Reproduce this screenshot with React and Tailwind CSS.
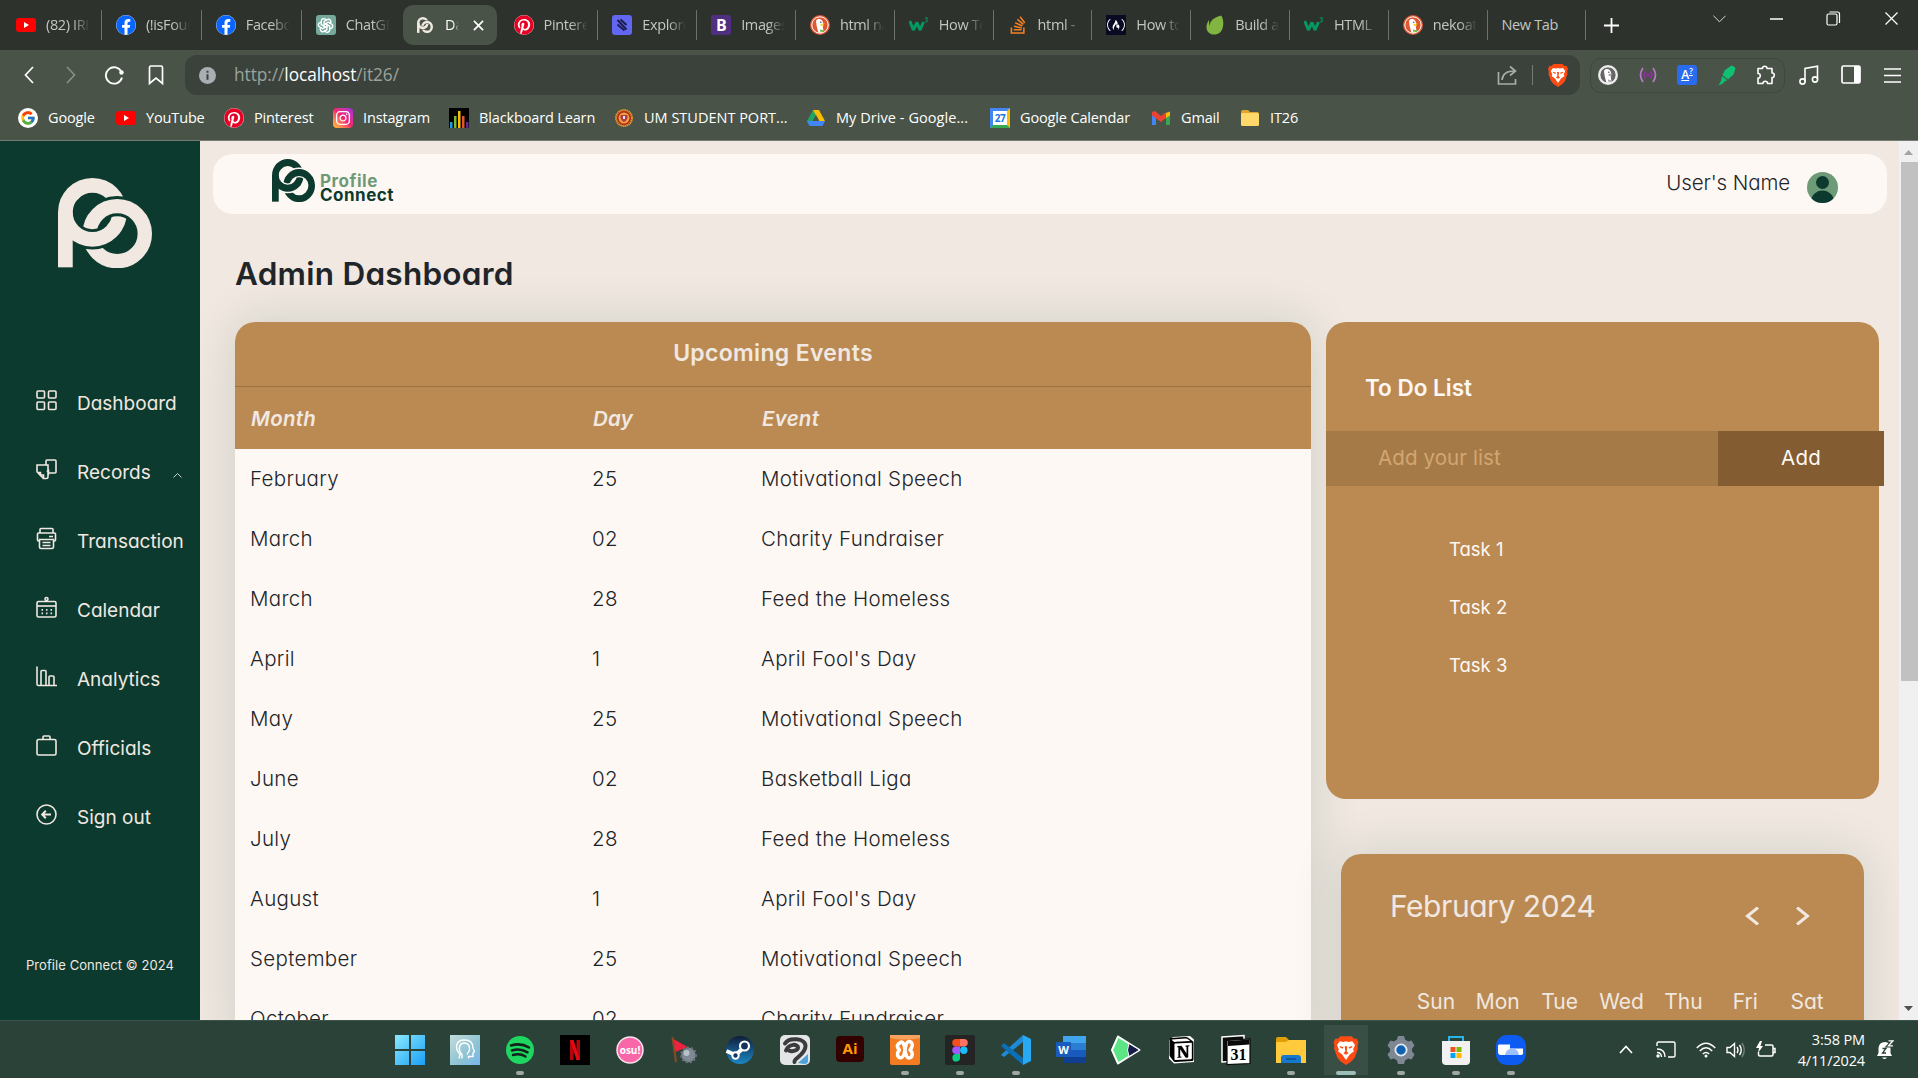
import React from "react";
import { FaFacebook, FaPinterest, FaInstagram, FaStackOverflow, FaFreeCodeCamp } from "react-icons/fa";
import { FcGoogle } from "react-icons/fc";
import { SiXampp, SiNotion } from "react-icons/si";
import { TbBrandOpenai } from "react-icons/tb";

/* ---------- shared marks ---------- */

function Logo({ id, className, color, gap }) {
  return (
    <svg viewBox="25 37 281 270" preserveAspectRatio="none" className={className} fill="none">
      <clipPath id={id}>
        <path d="M-59 -21L400 375V500H-59Z" />
      </clipPath>
      <clipPath id={`${id}-wide`}>
        <path d="M-59 -33L400 363V500H-59Z" />
      </clipPath>
      <circle cx="128" cy="140" r="81" stroke={color} strokeWidth="44" />
      <circle cx="202" cy="204" r="82.500" stroke={gap} strokeWidth="61" />
      <circle cx="202" cy="204" r="82.500" stroke={color} strokeWidth="43" />
      <g clipPath={`url(#${id})`}>
        <circle cx="128" cy="140" r="81" stroke={gap} strokeWidth="61" />
      </g>
      <g clipPath={`url(#${id}-wide)`}>
        <circle cx="128" cy="140" r="81" stroke={color} strokeWidth="44" />
      </g>
      <path d="M25 140H69V305H25Z" fill={color} />
    </svg>
  );
}

const YouTube = () => (
  <svg viewBox="0 0 20 20" className="size-5">
    <rect y="3" width="20" height="14" rx="3" fill="#f00" />
    <path d="M8 7v6l5-3z" fill="#fff" />
  </svg>
);
const Facebook = () => (
  <span className="flex size-5 rounded-full bg-white">
    <FaFacebook className="size-5 text-[#0866ff]" />
  </span>
);
const Pinterest = () => (
  <span className="flex size-5 rounded-full bg-white">
    <FaPinterest className="size-5 text-[#e60023]" />
  </span>
);
const ChatGpt = () => (
  <span className="flex size-5 items-center justify-center rounded-[3px] bg-[#75a99c]">
    <TbBrandOpenai className="size-[17px] text-white" />
  </span>
);
const Explore = () => (
  <svg viewBox="0 0 20 20" className="size-5">
    <rect width="20" height="20" rx="3" fill="#6366f1" />
    <path d="M5.500 9.500l7 6M5.500 5l9 9.500M8.500 4.500l6 5.500" stroke="#1c1e4c" strokeWidth="2" />
  </svg>
);
const Bootstrap = () => (
  <span className="flex size-5 items-center justify-center rounded-[3px] bg-[#4f2f7f] text-[16px] leading-none font-bold text-white">B</span>
);
const Duck = ({ mono }) => (
  <svg viewBox="0 0 20 20" className="size-5">
    <circle cx="10" cy="10" r="10" fill={mono ? "#e8e8e8" : "#de5833"} />
    <circle cx="10" cy="10" r="8.200" fill={mono ? "#666" : "#de5833"} stroke="#fff" strokeWidth="1" />
    <path d="M7 4.500c3-1.500 6 .5 6.200 4 .1 2-.5 3.500-.2 5l.8 3.600c-2 .9-4 .9-5.500.2C7.500 14 6.500 11 6.300 8.500 6.100 6.500 5.800 5.200 7 4.500z" fill="#fff" />
    <path d="M10.500 9.200c1.500-.7 3-.9 4.500-.6-.8.9-2 1.300-3.300 1.500 1 .4 2 .5 2.600.6-1.500.9-3.400.6-3.800-.4z" fill={mono ? "#999" : "#fdd20a"} />
    <path d="M10 14.500l4 1v1.700l-4-.6z" fill={mono ? "#aaa" : "#65bc46"} />
    <circle cx="10.800" cy="7.200" r=".8" fill={mono ? "#555" : "#2d4f8e"} />
  </svg>
);
const W3 = () => (
  <svg viewBox="0 0 20 20" className="size-5" fill="none" stroke="#059862">
    <path d="M.8 6l3.600 9L8 7.500l3 7.500 3.500-8" strokeWidth="3" strokeLinejoin="bevel" />
    <path d="M15.800 3h3l-1.600 1.700c2.400 0 2 3-1.400 2.100" strokeWidth="1" />
  </svg>
);
const StackOverflow = () => <FaStackOverflow className="size-5 text-[#f48024]" />;
const FreeCode = () => (
  <span className="flex size-5 items-center justify-center bg-[#0a0a23]">
    <FaFreeCodeCamp className="size-[18px] text-white" />
  </span>
);
const Leaf = () => (
  <svg viewBox="0 0 20 20" className="size-5">
    <path d="M16 .5c3 3 3.500 13-1 17-5 4-13 2-13.500-4.500-.2-3 .8-5.500 2.500-8 .3 2-.2 4 .5 6C5 5 10 2 16 .5z" fill="#81b441" />
  </svg>
);
const Brave = ({ className }) => (
  <svg viewBox="0 0 20 24" className={className}>
    <path d="M5.500 1h9l2 2 2-.2L20 6l-.7 2 .2 3-2.500 7-2.500 3L10 24l-4.500-3L3 18 .5 11l.2-3L0 6l1.500-3.200 2 .2z" fill="#fb4b12" />
    <path d="M5 5l3 .6L10 5l2 .6L15 5l2.200 3-1.500 3.500.7 1.500-3.400 2.500L10 20l-3-4.500L3.600 13l.7-1.500L2.800 8z" fill="#fff" />
    <path d="M5 8.800l3 .9-.8 1.300L5 9.700zM15 8.800l-3 .9.800 1.300L15 9.700zM9 9l.4 4L8 14.500l2 1.300 2-1.300L10.600 13 11 9z" fill="#fb4b12" />
  </svg>
);

/* ---------- browser chrome ---------- */

const leftTabs = [
  ["(82) IRIS", YouTube],
  ["(!isFound", Facebook],
  ["Facebook", Facebook],
  ["ChatGPT", ChatGpt],
];
const rightTabs = [
  ["Pinterest", Pinterest],
  ["Explore", Explore],
  ["Images", Bootstrap],
  ["html nav", Duck],
  ["How To", W3],
  ["html -", StackOverflow],
  ["How to", FreeCode],
  ["Build an", Leaf],
  ["HTML", W3],
  ["nekoatsu", Duck],
];

function Tab({ title, icon: Icon, wide, last }) {
  return (
    <div className={`flex h-[30px] shrink-0 items-center pl-[14px] ${wide ? "w-[99.9px]" : "w-[98.8px]"} ${last ? "" : "border-r border-[#6c716b]"}`}>
      <Icon />
      <span className="ml-[10px] w-[44px] overflow-hidden whitespace-nowrap text-[#c3c7c1] [mask-image:linear-gradient(to_right,#000_60%,transparent)]">{title}</span>
    </div>
  );
}

function TabStrip() {
  return (
    <div className="flex h-[50px] shrink-0 items-center bg-[#2d322d] pl-[2px] text-[14.5px] tracking-[-0.025em]">
      {leftTabs.map(([t, I], i) => (
        <Tab key={t} title={t} icon={I} wide last={i === 3} />
      ))}
      <div className="ml-[1.5px] flex h-10 w-[94px] shrink-0 items-center rounded-[10px] bg-[#495347] pl-[14px]">
        <Logo id="fav" className="h-4 w-[16px]" color="#f0e8e1" gap="#495347" />
        <span className="ml-[12px] w-[14px] overflow-hidden text-white [mask-image:linear-gradient(to_right,#000_55%,transparent)]">Dashboard</span>
        <svg viewBox="0 0 12 12" className="ml-[14px] size-[11px]" stroke="#fff" strokeWidth="1.800">
          <path d="M1 1l10 10M11 1L1 11" />
        </svg>
      </div>
      <div className="w-[2.5px] shrink-0" />
      {rightTabs.map(([t, I]) => (
        <Tab key={t} title={t} icon={I} />
      ))}
      <div className="flex h-[30px] w-[98.800px] shrink-0 items-center border-r border-[#6c716b] pl-[14px] text-[#c3c7c1]">New Tab</div>
      <svg viewBox="0 0 15 15" className="ml-[18px] size-[15px]" stroke="#fff" strokeWidth="1.800">
        <path d="M7.500 0v15M0 7.500h15" />
      </svg>
      <div className="mb-[13px] flex flex-1 items-center justify-end pr-[20px]">
        <svg viewBox="0 0 14 8" className="h-2 w-[13px]" fill="none" stroke="#e6e8e6">
          <path d="M.5.5L7 7 13.500.5" />
        </svg>
        <svg viewBox="0 0 13 2" className="ml-[44px] h-[2px] w-[13px]" stroke="#fff" strokeWidth="1.500">
          <path d="M0 1h13" />
        </svg>
        <svg viewBox="0 0 15 15" className="ml-[43px] size-[15px]" fill="none" stroke="#fff" strokeWidth="1.200">
          <rect x="1" y="3" width="10" height="11" rx="1.500" />
          <path d="M3.500 1h8q2 0 2 2v9" />
        </svg>
        <svg viewBox="0 0 13 13" className="ml-[44px] size-[13px]" stroke="#fff" strokeWidth="1.200">
          <path d="M.5.5l12 12M12.500.5l-12 12" />
        </svg>
      </div>
    </div>
  );
}

function Toolbar() {
  return (
    <div className="flex h-[50px] shrink-0 items-center">
      <svg viewBox="0 0 10 18" className="ml-[24px] h-[18px] w-[10px]" fill="none" stroke="#fff" strokeWidth="1.700">
        <path d="M9 1L1.500 9 9 17" />
      </svg>
      <svg viewBox="0 0 10 18" className="ml-[32px] h-[18px] w-[10px]" fill="none" stroke="#889085" strokeWidth="1.700">
        <path d="M1 1l7.500 8L1 17" />
      </svg>
      <svg viewBox="0 0 20 20" className="ml-[28px] size-5" fill="none" stroke="#fff" strokeWidth="1.800">
        <path d="M17.500 7A8.200 8.200 0 1 0 18 12.500" />
        <circle cx="17.500" cy="7.500" r="2.200" fill="#fff" stroke="none" />
      </svg>
      <svg viewBox="0 0 16 20" className="ml-[24px] h-5 w-4" fill="none" stroke="#fff" strokeWidth="1.700">
        <path d="M1.500 2.500q0-1.500 1.500-1.500h10q1.500 0 1.500 1.500v16L8 13l-6.500 5.500z" />
      </svg>
      <div className="ml-[21px] flex h-10 w-[1395px] items-center rounded-[12px] bg-[#3a423b] pr-[12px] pl-[14px]">
        <svg viewBox="0 0 17 17" className="size-[17px]">
          <circle cx="8.500" cy="8.500" r="8.500" fill="#a9aeb1" />
          <path d="M8.500 3.800v2M8.500 7.200v5.500" stroke="#3a423b" strokeWidth="2" />
        </svg>
        <span className="ml-[18px] flex-1 text-[17.300px] tracking-[-0.003em] text-[#9ca29c]">
          http://<span className="text-white">localhost</span>/it26/
        </span>
        <svg viewBox="0 0 20 20" className="size-5" fill="none" stroke="#a7ada6" strokeWidth="1.700">
          <path d="M1.500 7v12h17v-5M5 15c.5-6 4-9 12.500-9M13 1.500L18.500 6 13 10.500" />
        </svg>
        <div className="mx-[15px] h-5 w-px bg-[#747b73]" />
        <Brave className="h-6 w-5" />
      </div>
      <div className="ml-[10px] flex h-[35px] w-[195px] items-center justify-between rounded-[11px] border border-[#3f483e] pr-[8px] pl-[7px]">
        <Duck mono />
        <svg viewBox="0 0 18 16" className="h-4 w-[18px]" fill="none" strokeWidth="1.700">
          <path d="M4 1q-5 7 0 14M14 1q5 7 0 14" stroke="#b77cc4" />
          <path d="M6.500 4.500q-2.500 3.500 0 7M11.500 4.500q2.500 3.500 0 7" stroke="#9c27b0" />
          <circle cx="9" cy="8" r="1.500" fill="#9c27b0" />
        </svg>
        <span className="flex size-5 items-center justify-center rounded-[3px] bg-[#2a6cf0] text-[12px] leading-none font-semibold text-white underline">
          A<sup className="text-[8px]">?</sup>
        </span>
        <svg viewBox="0 0 18 21" className="h-[21px] w-[18px]">
          <path d="M13.500.5q3 .5 4 3l-2 6-5.500 5-5.500-4.500 2.500-5z" fill="#0fbf72" />
          <path d="M4 11l5.200 4.300-2.700 1.200-1.500 2L.5 20.500 3 16z" fill="#0fbf72" />
        </svg>
        <svg viewBox="0 0 20 20" className="size-5" fill="none" stroke="#fff" strokeWidth="1.600" strokeLinejoin="round">
          <path d="M2 3.500h4.500C6 .5 11.500.5 11 3.500h5V8c3-.5 3 5 0 4.500v6h-4.500c.5-3-5-3-4.500 0H2V13c3 .5 3-5 0-4.500z" />
        </svg>
      </div>
      <svg viewBox="0 0 20 20" className="ml-[14px] size-5" fill="none" stroke="#fff" strokeWidth="1.600">
        <path d="M6 16.500V3.500l12.500-2.300v13" />
        <circle cx="3.500" cy="16.500" r="2.600" />
        <circle cx="16" cy="14.500" r="2.600" />
      </svg>
      <svg viewBox="0 0 20 20" className="ml-[22px] size-5">
        <rect x="1" y="1" width="18" height="17" rx="1.500" fill="none" stroke="#fff" strokeWidth="1.700" />
        <path d="M13 1h6v17h-6z" fill="#fff" />
      </svg>
      <svg viewBox="0 0 17 15" className="ml-[23px] h-[15px] w-[17px]" stroke="#fff" strokeWidth="1.500">
        <path d="M0 1h17M0 7.500h17M0 14h17" />
      </svg>
    </div>
  );
}

const Instagram = () => (
  <span className="flex size-5 items-center justify-center rounded-[4px] bg-linear-to-tr from-[#ffc107] via-[#f4216b] to-[#a31ae0]">
    <FaInstagram className="size-4 text-white" />
  </span>
);
const Google = () => (
  <span className="flex size-5 items-center justify-center rounded-full bg-white">
    <FcGoogle className="size-4" />
  </span>
);
const Blackboard = () => (
  <svg viewBox="0 0 20 20" className="size-5">
    <path d="M0 0h20v20H0z" fill="#000" />
    <path d="M1 14h2.500v6H1z" fill="#1e9be8" />
    <path d="M5 8h2.500v12H5z" fill="#7cb82f" />
    <path d="M9 3h2.500v17H9z" fill="#fbbc05" />
    <path d="M13 8h2.500v12H13z" fill="#e4572e" />
    <path d="M17 14h2.500v6H17z" fill="#5b2d8e" />
  </svg>
);
const Seal = () => (
  <svg viewBox="0 0 20 20" className="size-5">
    <circle cx="10" cy="10" r="8" fill="#b3261e" stroke="#d9a02b" strokeWidth="2" strokeDasharray="1.500 .6" />
    <circle cx="10" cy="10" r="5.500" fill="#e8a33b" />
    <path d="M6.500 7h7v3q-1 3-3.500 4-2.500-1-3.500-4z" fill="#b33a45" />
    <path d="M9 8h2v3H9z" fill="#e6e6ee" />
  </svg>
);
const Drive = () => (
  <svg viewBox="0 0 20 20" className="size-5">
    <path d="M7 2h6L6.500 14 3.500 18 1 13z" fill="#1fa463" />
    <path d="M7 2h6l6 11h-6z" fill="#fbbc04" />
    <path d="M1 13l2.500 5h13l2.500-5H6.500z" fill="#4285f4" />
    <path d="M10 7l-3.300 6h6.600z" fill="#495347" />
  </svg>
);
const GCalendar = () => (
  <span className="flex size-5 items-center justify-center border-[3px] border-t-[#4285f4] border-r-[#fbbc04] border-b-[#34a853] border-l-[#4285f4] bg-white text-[10px] leading-none font-bold tracking-[-0.05em] text-[#1a73e8]">27</span>
);
const Gmail = () => (
  <svg viewBox="0 0 20 20" className="size-5">
    <path d="M1 5v12h4V8z" fill="#4285f4" />
    <path d="M19 5v12h-4V8z" fill="#34a853" />
    <path d="M15 5l4-1.500v4L15 10z" fill="#fbbc04" />
    <path d="M1 4l3-1 6 5 5-4v6l-5 4-9-6.500z" fill="#ea4335" />
  </svg>
);
const Folder = () => (
  <svg viewBox="0 0 20 20" className="size-5">
    <path d="M1 4q0-2 2-2h5l2 2h7q2 0 2 2v10H1z" fill="#dfa52c" />
    <rect x="1" y="5" width="18" height="13" rx="1.500" fill="#ffd86b" />
  </svg>
);

const bookmarks = [
  ["Google", Google, "w-[98px]"],
  ["YouTube", YouTube, "w-[108px]"],
  ["Pinterest", Pinterest, "w-[109px]"],
  ["Instagram", Instagram, "w-[116px]"],
  ["Blackboard Learn", Blackboard, "w-[165px]"],
  ["UM STUDENT PORT...", Seal, "w-[192px] tracking-[0px]"],
  ["My Drive - Google...", Drive, "w-[184px] tracking-[0.004em]"],
  ["Google Calendar", GCalendar, "w-[161px]"],
  ["Gmail", Gmail, "w-[89px]"],
  ["IT26", Folder, "w-[80px]"],
];

function Bookmarks() {
  return (
    <div className="flex h-10 shrink-0 items-center pb-1 pl-[18px] text-[14.5px] tracking-[-0.01em] text-white">
      {bookmarks.map(([t, I, w]) => (
        <div key={t} className={`flex shrink-0 items-center gap-[10px] whitespace-nowrap ${w}`}>
          <I />
          {t}
        </div>
      ))}
    </div>
  );
}

/* ---------- page ---------- */

const navIcons = {
  Dashboard: (
    <>
      <rect x="1" y="1" width="7.500" height="7" rx="1" />
      <rect x="12.500" y="1" width="7.500" height="7" rx="1" />
      <rect x="1" y="12" width="7.500" height="7.500" rx="1" />
      <rect x="12.500" y="12" width="7.500" height="7.500" rx="1" />
    </>
  ),
  Records: (
    <>
      <path d="M10 6V2q0-1 1-1h8q1 0 1 1v11q0 1-1 1h-6" />
      <path d="M1 6h11v12q0 1.500-1.500 1.500H7.500V16H4.500V13.500H2q-1 0-1-1zM2 14l5.500 5.500M12.500 10.500v3l-1.500-2" />
    </>
  ),
  Transaction: (
    <>
      <path d="M4 5V1.500q0-1 1-1h11q1 0 1 1V5" />
      <path d="M4 13H2.500q-1 0-1-1V6q0-1 1-1h16q1 0 1 1v6q0 1-1 1H17M13 8.500h4" />
      <path d="M3.500 11.500h14V19q0 1.500-1.500 1.500H5Q3.500 20.500 3.500 19zM6.500 14.500h8M6.500 17.500h8" />
    </>
  ),
  Calendar: (
    <>
      <rect x="1" y="4.500" width="19" height="15.500" rx="1.500" />
      <path d="M1 9h19" />
      <circle cx="10.500" cy="2" r="1.500" />
      <path d="M5.500 12.800H16M5.500 16.300H16" strokeDasharray="1.500 3" strokeWidth="1.800" />
    </>
  ),
  Analytics: <path d="M1 .5v17.500q0 1.500 1.500 1.500H21M5 19V5.500q0-1 1-1h3q1 0 1 1V19M13 19V11q0-1 1-1h3q1 0 1 1v8" />,
  Officials: (
    <>
      <rect x="1" y="4.500" width="19" height="15.500" rx="1.500" />
      <path d="M7 4.500V2q0-1 1-1h5q1 0 1 1v2.500" />
    </>
  ),
  "Sign out": (
    <>
      <circle cx="10.500" cy="10.500" r="9.500" />
      <path d="M15 10.500H6.500M9.800 6.800L6.200 10.500l3.600 3.700" strokeWidth="2" />
    </>
  ),
};

function Sidebar() {
  return (
    <aside className="flex w-[200px] shrink-0 flex-col bg-[#0d3a2e] pt-[37px] text-[#f0e8e1]">
      <Logo id="side" className="ml-[58px] h-[90px] w-[94px] shrink-0" color="#f0e8e1" gap="#0d3a2e" />
      <nav className="mt-[102px]">
        {Object.entries(navIcons).map(([name, art]) => (
          <div key={name} className="flex h-[69px] items-center pl-[36px] text-[19px]">
            <svg viewBox="0 0 21 21" className="mr-[20px] mb-[8px] size-[21px] shrink-0 overflow-visible" fill="none" stroke="#f0e8e1" strokeWidth="1.600">
              {art}
            </svg>
            {name}
            {name === "Records" && (
              <svg viewBox="0 0 9 6" className="mt-[3px] mr-[18px] ml-auto h-[6px] w-[9px]" fill="none" stroke="#c9d0c8">
                <path d="M.5 5.500l4-4 4 4" />
              </svg>
            )}
          </div>
        ))}
      </nav>
      <p className="mt-[102px] pl-[26px] text-[13px] leading-5 tracking-[0.005em] whitespace-nowrap">Profile Connect © 2024</p>
    </aside>
  );
}

const events = [
  ["February", "25", "Motivational Speech"],
  ["March", "02", "Charity Fundraiser"],
  ["March", "28", "Feed the Homeless"],
  ["April", "1", "April Fool's Day"],
  ["May", "25", "Motivational Speech"],
  ["June", "02", "Basketball Liga"],
  ["July", "28", "Feed the Homeless"],
  ["August", "1", "April Fool's Day"],
  ["September", "25", "Motivational Speech"],
  ["October", "02", "Charity Fundraiser"],
];

function Events() {
  return (
    <section className="w-[1076px] shrink-0 self-start rounded-[20px] bg-[#fef8f4] shadow-[0_0_50px_rgba(13,58,46,0.14)]">
      <div className="rounded-t-[20px] bg-[#bb8a52] text-[#f0e8e1]">
        <h2 className="flex h-[65px] items-center justify-center border-b border-[#9b7343] pb-[2px] text-[23px] font-semibold tracking-[0.014em]">Upcoming Events</h2>
        <div className="grid h-[62px] grid-cols-[342px_169px_1fr] items-center pt-[2px] pl-4 text-[20.500px] font-semibold tracking-[0.012em] italic">
          <span>Month</span>
          <span>Day</span>
          <span>Event</span>
        </div>
      </div>
      {events.map(([m, d, e], i) => (
        <div key={i} className="grid h-[60px] grid-cols-[342px_169px_1fr] items-center pt-[1px] pl-[15px] text-[20.500px] font-light tracking-[0.016em] text-[#212529]">
          <span>{m}</span>
          <span>{d}</span>
          <span>{e}</span>
        </div>
      ))}
    </section>
  );
}

function Todo() {
  return (
    <section className="h-[477px] rounded-[20px] bg-[#bb8a52] text-[#fef8f4]">
      <h2 className="h-[109px] pt-[51px] pl-[39px] text-[22.500px] leading-[30px] font-semibold">To Do List</h2>
      <div className="flex h-[55px] w-[558px] text-[20.500px]">
        <div className="flex w-[392px] items-center bg-[#a67a47] pl-[52px] tracking-[0.005em] text-[#d3a671]">Add your list</div>
        <div className="flex flex-1 items-center justify-center bg-[#835c31] tracking-[0.01em]">Add</div>
      </div>
      <ul className="pt-[35px] pl-[123px] text-[18.500px]">
        <li className="flex h-[58px] items-center">Task 1</li>
        <li className="flex h-[58px] items-center">Task 2</li>
        <li className="flex h-[58px] items-center">Task 3</li>
      </ul>
    </section>
  );
}

function Calendar() {
  return (
    <section className="mt-[55px] ml-[15px] h-[460px] w-[523px] rounded-[20px] bg-[#bb8a52] pt-[31px] text-[#f0e8e1] shadow-[0_0_50px_rgba(13,58,46,0.14)]">
      <div className="flex h-[42px] items-center pr-[54px] pl-[49px]">
        <h2 className="flex-1 text-[30px] tracking-[-0.015em]">February 2024</h2>
        <svg viewBox="0 0 14 18" className="mt-[20px] h-[18px] w-[14px]" fill="none" stroke="#f0e8e1" strokeWidth="3">
          <path d="M13 .5L2.500 9 13 17.500" />
        </svg>
        <svg viewBox="0 0 14 18" className="mt-[20px] ml-[37px] h-[18px] w-[14px]" fill="none" stroke="#f0e8e1" strokeWidth="3">
          <path d="M1 .5L11.500 9 1 17.500" />
        </svg>
      </div>
      <div className="mt-[60px] ml-[64px] grid w-[433px] grid-cols-7 text-center text-[21px] leading-[30px]">
        {["Sun", "Mon", "Tue", "Wed", "Thu", "Fri", "Sat"].map((d) => (
          <span key={d}>{d}</span>
        ))}
      </div>
    </section>
  );
}

function Page() {
  return (
    <div className="flex h-[879px] shrink-0 overflow-hidden bg-[#f0e8e1] font-[Inter,sans-serif] [font-feature-settings:'cv11']">
      <Sidebar />
      <main className="h-[879px] w-[1699px] shrink-0 overflow-hidden pt-[13px]">
        <header className="mr-[12px] ml-[13px] flex h-[60px] items-center rounded-[20px] bg-[#fef8f4] pr-[49px] pl-[59px] text-[#212529]">
          <Logo id="head" className="mb-[8px] h-[43px] w-[43px]" color="#0d3a2e" gap="#fef8f4" />
          <div className="mt-[8px] ml-[5px] flex-1 text-[17px] leading-[14px] font-bold tracking-[0.03em]">
            <div className="text-[#6f9a77]">Profile</div>
            <div className="text-[#0d3a2e]">Connect</div>
          </div>
          <span className="mb-[2px] text-[20.500px] font-light tracking-[-0.005em]">User's Name</span>
          <svg viewBox="0 0 31 31" className="mt-[7px] ml-[17px] size-[31px]">
            <clipPath id="face">
              <circle cx="15.500" cy="15.500" r="15.500" />
            </clipPath>
            <g clipPath="url(#face)">
              <path d="M0 0h31v31H0z" fill="#6f9a77" />
              <circle cx="15.500" cy="10.500" r="6.500" fill="#0d3a2e" />
              <circle cx="15.500" cy="30" r="11.500" fill="#0d3a2e" />
            </g>
          </svg>
        </header>
        <h1 className="flex h-[108px] items-center pt-[12px] pl-[35px] text-[31.500px] font-semibold tracking-[0.008em] text-[#212529]">Admin Dashboard</h1>
        <div className="flex gap-[15px] pl-[35px]">
          <Events />
          <div className="w-[553px] shrink-0">
            <Todo />
            <Calendar />
          </div>
        </div>
      </main>
      <div className="flex w-[19px] flex-col items-center bg-[#f0f0f0]">
        <svg viewBox="0 0 9 5" className="mt-[9px] h-[5px] w-[9px]">
          <path d="M0 5L4.500 0 9 5z" fill="#a3a3a3" />
        </svg>
        <div className="mt-[7px] ml-[2px] h-[519px] w-[17px] bg-[#c1c1c1]" />
        <svg viewBox="0 0 9 5" className="mt-auto mb-[9px] h-[5px] w-[9px]">
          <path d="M0 0l4.500 5L9 0z" fill="#505050" />
        </svg>
      </div>
    </div>
  );
}

/* ---------- taskbar ---------- */

const apps = [
  {
    name: "start",
    art: <path d="M0 0h14v14H0zM16 0h14v14H16zM0 16h14v14H0zM16 16h14v14H16z" fill="url(#win)" />,
  },
  {
    name: "assistant",
    art: (
      <>
        <path d="M0 0h30v30H0z" fill="url(#teal)" />
        <path d="M9 23.500l1-4C4 13 6 5 14.500 5 21 5 23 9 23 13l1.500 3.500L23 18v3.500h-4.500v2M12 23.500v-4C7.500 15 9 8 14.500 8c4 0 5.500 3.500 5 7-.5 2-2 3-2.500 4.500" fill="none" stroke="#fff" strokeWidth="1.400" />
      </>
    ),
  },
  {
    name: "spotify",
    dot: true,
    art: (
      <>
        <circle cx="15" cy="15" r="14" fill="#1ed760" />
        <path d="M6 10.500q10-3 18 2M7 15.500q8-2.500 15.500 1.800M8 20q7-2 12.500 1.500" fill="none" stroke="#12221a" strokeWidth="2.500" strokeLinecap="round" />
      </>
    ),
  },
  {
    name: "netflix",
    art: (
      <>
        <path d="M0 0h30v30H0z" fill="#000" />
        <path d="M10 5h3.500v20H10zM16.500 5H20v20h-3.500z" fill="#b1060f" />
        <path d="M10 5h3.500L20 25h-3.500z" fill="#e50914" />
      </>
    ),
  },
  {
    name: "osu",
    art: (
      <>
        <circle cx="15" cy="15" r="13" fill="#f967a8" stroke="#f5e3ec" strokeWidth="1.500" />
        <text x="15" y="18.500" fontSize="10" fontWeight="700" textAnchor="middle" fill="#fff">osu!</text>
      </>
    ),
  },
  {
    name: "mines",
    art: (
      <>
        <path d="M2.500 2l3.500 25" stroke="#8a4b20" strokeWidth="2" />
        <path d="M3.500 4l14 8-12 5z" fill="#f0203f" />
        <circle cx="18.500" cy="20" r="7.200" fill="#7f8a94" stroke="#6a747d" strokeWidth="2.500" strokeDasharray="2 2" />
        <circle cx="16.500" cy="18" r="3" fill="#b9c2c9" />
      </>
    ),
  },
  {
    name: "steam",
    art: (
      <>
        <circle cx="15" cy="15" r="14" fill="url(#steam)" />
        <path d="M1.500 16l9 4 9-8" stroke="#fff" strokeWidth="4" fill="none" />
        <circle cx="19.500" cy="11" r="4.500" fill="#16325f" stroke="#fff" strokeWidth="2.200" />
        <circle cx="10.500" cy="20.500" r="3.200" fill="#16325f" stroke="#fff" strokeWidth="2" />
      </>
    ),
  },
  {
    name: "clip",
    art: (
      <>
        <rect width="30" height="30" rx="5" fill="#e4e5e6" />
        <path d="M5 8.500C9 2 25.500 3 25.500 11c0 9-12 12-11 16M6 15.500C9 8 18 9 18 12.500c0 3-6 4.500-9 3" fill="none" stroke="#3b3b3d" strokeWidth="4" strokeLinecap="round" />
        <path d="M18 28l10-9v7q0 3-4 3z" fill="#4aa3dc" />
      </>
    ),
  },
  {
    name: "ai",
    art: (
      <>
        <rect x="1" y="1" width="28" height="26" rx="4" fill="#330000" />
        <text x="15" y="19" fontSize="15" fontWeight="700" textAnchor="middle" fill="#ff9a00">Ai</text>
      </>
    ),
  },
  {
    name: "xampp",
    dot: true,
    art: (
      <>
        <rect width="30" height="30" rx="2" fill="#f37b22" />
        <path d="M0 0h30v3q-15 3-30 0z" fill="#f8a25f" />
        <path d="M8.500 8.500q-2.500 3 1 6.500-3.500 3.500-1 7 3 2 5-1.500 1-2 1.500-5.500.5-4 1.500-6.500 2-3.500 5-1 2 3.500-1.500 7.500 3.500 3 1.500 7-3 2.500-5-1-1-2.500-1.500-6-.5-4-1.500-6.500-2-3-4 0z" fill="none" stroke="#fff" strokeWidth="3.500" strokeLinejoin="round" />
      </>
    ),
  },
  {
    name: "figma",
    dot: true,
    art: (
      <>
        <rect width="30" height="30" rx="2" fill="#242424" />
        <path d="M15 4v7.500h-4a3.700 3.700 0 0 1 0-7.500z" fill="#f24e1e" />
        <path d="M15 4h4a3.700 3.700 0 0 1 0 7.500h-4z" fill="#ff7262" />
        <path d="M15 11.500V19h-4a3.700 3.700 0 0 1 0-7.500z" fill="#a259ff" />
        <circle cx="18.800" cy="15.200" r="3.700" fill="#1abcfe" />
        <path d="M11 19h4v3.700A3.800 3.800 0 1 1 11 19z" fill="#0acf83" />
      </>
    ),
  },
  {
    name: "vscode",
    dot: true,
    art: (
      <>
        <path d="M22 0L2 18l-2 2 3 2L22 7z" fill="#1f8bd4" />
        <path d="M22 30L0 11l3-3 19 15z" fill="#0b6fb8" />
        <path d="M22 0l8 4v22l-8 4z" fill="#29a9f2" />
      </>
    ),
  },
  {
    name: "word",
    art: (
      <>
        <path d="M7 1h23v8H7z" fill="#41a5ee" />
        <path d="M7 8h23v7H7z" fill="#2b7cd3" />
        <path d="M7 15h23v7H7z" fill="#185abd" />
        <path d="M7 22h23v6H7z" fill="#103f91" />
        <rect y="7" width="15" height="15" rx="1" fill="#185abd" />
        <text x="7.500" y="18.500" fontSize="11" fontWeight="700" textAnchor="middle" fill="#fff">W</text>
      </>
    ),
  },
  {
    name: "player",
    art: (
      <>
        <path d="M7 1.500l21.500 13.500L7 28.500 1 15z" fill="#5be584" stroke="#fff" strokeWidth="2" strokeLinejoin="round" />
        <path d="M18 8.500L28.500 15 18 21.500q-3-6.500 0-13z" fill="#161d4a" stroke="#fff" />
      </>
    ),
  },
  {
    name: "notion",
    art: (
      <>
        <path d="M3 5l4-3 17-1 4 3.500V27l-20 1.500-5-5z" fill="#fff" />
        <SiNotion x="3" y="2" size={25} color="#000" />
      </>
    ),
  },
  {
    name: "planner",
    art: (
      <>
        <path d="M1 2l22-1.500v25L1 27z" fill="#0b0b0b" stroke="#fff" strokeWidth="1.500" />
        <path d="M6 5.500l23-1.500v24.500L6 29.500z" fill="#fff" stroke="#0b0b0b" strokeWidth="1.200" />
        <path d="M7 6l21.500-1.500V9.500L7 11z" fill="#0b0b0b" />
        <text x="17.500" y="25" fontSize="16" fontWeight="700" textAnchor="middle" fill="#000" fontFamily="Liberation Serif, serif">31</text>
      </>
    ),
  },
  {
    name: "explorer",
    dot: true,
    art: (
      <>
        <path d="M0 4q0-2 2-2h8l3 3h17v6H0z" fill="#e09f06" />
        <path d="M0 7h10l3-2h17v23H0z" fill="#ffcb3d" />
        <path d="M5 28v-5q0-3 3-3h14q3 0 3 3v5z" fill="#1678ca" />
        <path d="M10 24h10" stroke="#0a4f93" strokeWidth="1.500" />
      </>
    ),
  },
  { name: "brave", active: true, art: <Brave className="size-full" /> },
  {
    name: "settings",
    dot: true,
    art: (
      <>
        <circle cx="15" cy="15" r="11" fill="#7e8793" />
        <path d="M12 1h6l1.500 5h-9zM12 29h6l1.500-5h-9zM1.500 10.500l3-5 5 1.500-4.500 8zM28.500 10.500l-3-5-5 1.500 4.500 8zM1.500 19.500l3 5 5-1.500-4.500-8zM28.500 19.500l-3 5-5-1.500 4.500-8z" fill="#7e8793" />
        <circle cx="15" cy="15" r="5.600" fill="#0f62b3" stroke="#e6e9ec" strokeWidth="1.800" />
      </>
    ),
  },
  {
    name: "store",
    dot: true,
    art: (
      <>
        <path d="M8 7V2h14v5" fill="none" stroke="#29b4ea" strokeWidth="2" />
        <path d="M1 6h28v20q0 4-4 4H5q-4 0-4-4z" fill="#f1f1f1" />
        <path d="M9.500 12h5v5h-5z" fill="#f25022" />
        <path d="M15.500 12h5v5h-5z" fill="#7fba00" />
        <path d="M9.500 18h5v5h-5z" fill="#00a4ef" />
        <path d="M15.500 18h5v5h-5z" fill="#ffb900" />
      </>
    ),
  },
  {
    name: "meet",
    dot: true,
    art: (
      <>
        <rect width="30" height="30" rx="11" fill="#0d5bf0" />
        <path d="M3 9.500h11v4h13V19q-1 1-2 1H5q-3 0-3-3v-6q0-1.500 1-1.500z" fill="#fff" />
        <path d="M9 20q1-6.500 7.500-6.500Q22 13.500 23 20z" fill="#9cc0fb" />
      </>
    ),
  },
];

function Taskbar() {
  return (
    <div className="flex h-[58px] shrink-0 border-t border-[#3c5349] bg-[#2b4238] pl-[382px] text-white">
      <svg className="h-0 w-0 shrink-0">
        <defs>
          <linearGradient id="win" x2="1" y2="1">
            <stop stopColor="#8be9fe" />
            <stop offset="1" stopColor="#1a9ff5" />
          </linearGradient>
          <linearGradient id="teal" x2="1" y2="1">
            <stop stopColor="#c3dcdb" />
            <stop offset=".6" stopColor="#8ec3d3" />
            <stop offset="1" stopColor="#79b5ef" />
          </linearGradient>
          <linearGradient id="steam" x2="0" y2="1">
            <stop stopColor="#111d3a" />
            <stop offset="1" stopColor="#1b88c4" />
          </linearGradient>
        </defs>
      </svg>
      {apps.map((a) => (
        <div key={a.name} className={`flex h-[57px] w-[55.100px] shrink-0 flex-col items-center pt-[14px] ${a.active ? "bg-[linear-gradient(#394f45,#394f45)] bg-[length:44px_50px] bg-center bg-no-repeat" : ""}`}>
          <svg viewBox="0 0 30 30" className="size-[30px] shrink-0 overflow-visible">
            {a.art}
          </svg>
          {a.dot && <span className="mt-[6px] h-1 w-2 rounded-full bg-[#9da8a2]" />}
          {a.active && <span className="mt-[6px] h-1 w-5 rounded-full bg-[#9bbfb8]" />}
        </div>
      ))}
      <div className="flex flex-1 items-center justify-end pr-[24px]">
        <svg viewBox="0 0 14 9" className="h-[9px] w-[14px]" fill="none" stroke="#fff" strokeWidth="1.700">
          <path d="M1 8l6-6.500L13 8" />
        </svg>
        <svg viewBox="0 0 20 17" className="ml-[23px] h-[17px] w-5" fill="none" stroke="#fff" strokeWidth="1.400">
          <path d="M1 5V2.500Q1 1 2.500 1h15Q19 1 19 2.500v12q0 1.500-1.500 1.500H12M1 8q8 0 8 8M1 11.500q4.500 0 4.500 4.500" />
          <circle cx="2" cy="15" r="1" fill="#fff" />
        </svg>
        <svg viewBox="0 0 20 16" className="ml-[20px] h-4 w-5" fill="none" stroke="#fff" strokeWidth="1.500">
          <path d="M.8 6q9.200-9.500 18.400 0M3.800 9q6.200-6.500 12.400 0M6.800 12q3.200-3 6.400 0" />
          <circle cx="10" cy="14" r="1.500" fill="#fff" stroke="none" />
        </svg>
        <svg viewBox="0 0 20 16" className="ml-[10px] h-4 w-5" fill="none" stroke="#fff" strokeWidth="1.400">
          <path d="M1 5.500v5h3l4.500 4V1.500L4 5.500zM11 5q2 3 0 6M13.500 3q3.500 5 0 10" />
          <path d="M16 1q4.500 7 0 14" stroke="#6f8178" />
        </svg>
        <svg viewBox="0 0 20 17" className="ml-[10px] h-[17px] w-5" fill="none" stroke="#fff" strokeWidth="1.500">
          <path d="M9 4h6.500Q17 4 17 5.500v8q0 1.500-1.500 1.500H4q-1.500 0-1.500-1.500V11M17 7.500h2v4h-2" />
          <path d="M4 0L0 7h3l-1 5 5-7H4.500L6 0z" fill="#fff" stroke="none" />
        </svg>
        <div className="ml-[17px] w-[72px] text-right text-[14.500px] leading-[21px] tracking-[-0.01em] whitespace-nowrap">
          3:58 PM
          <br />
          4/11/2024
        </div>
        <svg viewBox="0 0 18 20" className="ml-[11px] h-5 w-[18px]">
          <path d="M1 16l1.500-3V8q.5-6 6.500-6 5 0 5.500 6v5L16 16z" fill="#fff" />
          <path d="M6 17.500h5q-2.500 3-5 0z" fill="#fff" />
          <path d="M6.500 8.500h3.500l-3.500 4.500h3.500" fill="none" stroke="#2b4238" strokeWidth="1.300" />
          <path d="M12.500.8H17l-4.500 5H17" fill="none" stroke="#2b4238" strokeWidth="3.500" />
          <path d="M12.500.8H17l-4.500 5H17" fill="none" stroke="#fff" strokeWidth="1.300" />
        </svg>
      </div>
    </div>
  );
}

export default function App() {
  return (
    <div className="flex h-[1078px] w-[1918px] flex-col overflow-hidden bg-[#495347] font-['Open_Sans','Noto_Sans',sans-serif]">
      <TabStrip />
      <Toolbar />
      <Bookmarks />
      <div className="h-px shrink-0 bg-[#767a74]" />
      <Page />
      <Taskbar />
    </div>
  );
}
